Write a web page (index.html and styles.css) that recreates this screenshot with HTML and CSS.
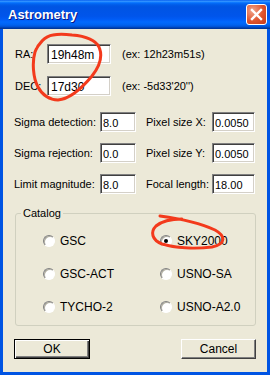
FILE: index.html
```html
<!DOCTYPE html>
<html lang="en">
<head>
    <meta charset="UTF-8">
    <title>Astrometry</title>
    <link rel="stylesheet" href="styles.css">
</head>
<body>
    <div class="window">
        <div class="titlebar">
            <span class="title">Astrometry</span>
            <span class="close">
                <svg width="13" height="13" viewBox="0 0 13 13"><path d="M2 2 L11 11 M11 2 L2 11" stroke="#fff" stroke-width="2.4" stroke-linecap="square"/></svg>
            </span>
        </div>
        <div class="client">
            <div class="coords">
                <label>RA:</label><input class="field" value="19h48m"><span class="hint">(ex: 12h23m51s)</span>
                <label>DEC:</label><input class="field" value="17d30"><span class="hint">(ex: -5d33'20'')</span>
            </div>
            <div class="params">
                <label>Sigma detection:</label><input class="field" value="8.0">
                <label class="second">Pixel size X:</label><input class="field" value="0.0050">
                <label>Sigma rejection:</label><input class="field" value="0.0">
                <label class="second">Pixel size Y:</label><input class="field" value="0.0050">
                <label>Limit magnitude:</label><input class="field" value="8.0">
                <label class="second">Focal length:</label><input class="field" value="18.00">
            </div>
            <fieldset class="catalog">
                <legend>Catalog</legend>
                <div class="radios">
                    <label class="opt"><input type="radio" name="cat">GSC</label>
                    <label class="opt"><input type="radio" name="cat" checked>SKY2000</label>
                    <label class="opt"><input type="radio" name="cat">GSC-ACT</label>
                    <label class="opt"><input type="radio" name="cat">USNO-SA</label>
                    <label class="opt"><input type="radio" name="cat">TYCHO-2</label>
                    <label class="opt"><input type="radio" name="cat">USNO-A2.0</label>
                </div>
            </fieldset>
            <div class="actions">
                <button class="btn default">OK</button>
                <button class="btn cancel">Cancel</button>
            </div>
        </div>
        <!-- hand drawn marks -->
        <svg class="ink" width="270" height="375" viewBox="0 0 270 375">
            <path d="M53 35 C45 36 38 44 35 52 C32 62 33 78 38 87 C42 95 50 100 58 100 C70 99 82 88 92 76 C99 67 103 56 99 47 C95 39 84 36 72 35 C64 34 58 34 53 35" />
            <path d="M160 216 C175 218 200 223 215 230 C226 236 226 244 212 247 C195 249 175 248 162 244 C152 240 150 232 156 226 C162 221 172 219 182 219" />
        </svg>
    </div>
</body>
</html>
```

FILE: styles.css
```css
html,
body {
    margin: 0;
    padding: 0;
}

body {
    font-family: "Liberation Sans", Arial, sans-serif;
    font-size: 11px;
    color: #000;
}

.window {
    position: relative;
    width: 270px;
    height: 375px;
    box-sizing: border-box;
    display: flex;
    flex-direction: column;
    background: #0054e3;
    padding: 0 3px 3px 3px;
    overflow: hidden;
}

.titlebar {
    height: 29px;
    margin: 0 -3px;
    padding: 0 3px 0 8px;
    display: flex;
    align-items: center;
    justify-content: space-between;
    background: linear-gradient(to bottom, #0058ee 0%, #3593ff 4%, #288eff 6%, #127dff 8%, #036ffc 10%, #0262ee 14%, #0057e5 20%, #0054e3 24%, #0055eb 56%, #005bf5 66%, #026afe 76%, #0062ef 86%, #0052d6 92%, #0040ab 96%, #003092 100%);
}

.title {
    font-weight: bold;
    font-size: 13px;
    color: #fff;
    text-shadow: 1px 1px #0a1883;
}

.close {
    width: 21px;
    height: 21px;
    box-sizing: border-box;
    border: 1px solid #fff;
    border-radius: 3px;
    background: radial-gradient(circle at 30% 30%, #f0a58c, #e0542d 55%, #c4391a);
    display: flex;
    align-items: center;
    justify-content: center;
}

.client {
    flex: 1;
    background: #ece9d8;
    padding-top: 15px;
}

.field {
    box-sizing: border-box;
    height: 20px;
    margin: 0;
    padding: 1px 0 0 3px;
    font-family: "Liberation Sans", Arial, sans-serif;
    font-size: 11px;
    color: #000;
    background: #fff;
    border: 1px solid;
    border-color: #808080 #fff #fff #808080;
    box-shadow: inset 1px 1px #404040, inset -1px -1px #d4d0c8;
    outline: none;
}

.coords {
    display: grid;
    grid-template-columns: 32px 64px auto;
    grid-auto-rows: 20px;
    row-gap: 12px;
    align-items: center;
    padding-left: 12px;
}

.coords .field {
    width: 64px;
    font-size: 12px;
}

.hint {
    padding-left: 11px;
}

.params {
    display: grid;
    grid-template-columns: 86px 36px 76px 43px;
    grid-auto-rows: 20px;
    row-gap: 11px;
    align-items: center;
    margin-top: 16px;
    padding-left: 11px;
}

.params .field {
    width: 100%;
    padding-left: 2px;
}

.params .second {
    padding-left: 10px;
}

.catalog {
    min-width: 0;
    margin: 13px 11px 0 12px;
    padding: 14px 0 12px 0;
    border: 1px solid #d0d0bf;
    border-radius: 3px;
}

.catalog legend {
    padding: 0 2px;
    margin-left: 5px;
    line-height: 13px;
}

.radios {
    display: grid;
    grid-template-columns: 117px auto;
    grid-auto-rows: 13px;
    row-gap: 20px;
    padding-left: 27px;
}

.opt {
    display: flex;
    align-items: center;
    gap: 5px;
    font-size: 12px;
}

.opt input {
    appearance: none;
    -webkit-appearance: none;
    width: 12px;
    height: 12px;
    margin: 0;
    border-radius: 50%;
    box-sizing: border-box;
    border: 1px solid;
    border-color: #808080 #fff #fff #808080;
    background: #fff;
    box-shadow: inset 1px 1px #b0aea0;
    position: relative;
}

.opt input:checked::after {
    content: "";
    position: absolute;
    left: 3px;
    top: 3px;
    width: 4px;
    height: 4px;
    border-radius: 50%;
    background: #000;
}

.actions {
    display: flex;
    justify-content: space-between;
    margin-top: 13px;
    padding: 0 11px;
}

.btn {
    height: 20px;
    box-sizing: border-box;
    margin: 0;
    padding: 0;
    font-family: "Liberation Sans", Arial, sans-serif;
    font-size: 12px;
    color: #000;
    background: #ece9d8;
    border: 1px solid;
    border-color: #fff #404040 #404040 #fff;
    box-shadow: inset -1px -1px #808080;
}

.btn.default {
    width: 76px;
    border: 1px solid #000;
    box-shadow: inset 1px 1px #fff, inset -1px -1px #404040, inset -2px -2px #808080;
}

.btn.cancel {
    width: 75px;
}

.ink {
    position: absolute;
    left: 0;
    top: 0;
    pointer-events: none;
}

.ink path {
    fill: none;
    stroke: #f33a1c;
    stroke-width: 3;
    stroke-linecap: round;
}
```
